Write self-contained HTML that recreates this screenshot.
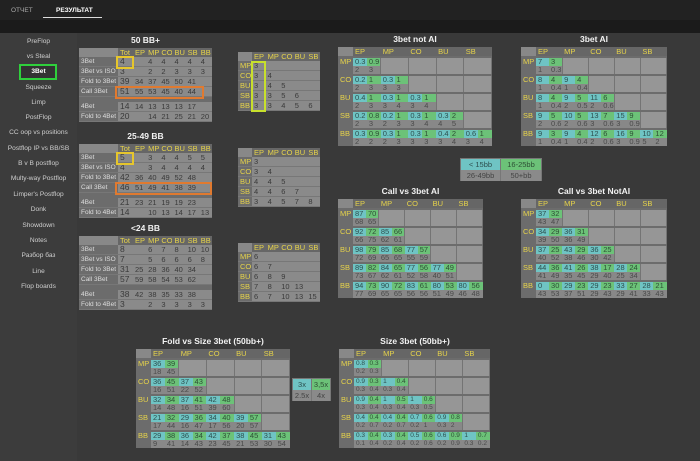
<!DOCTYPE html><html><head><meta charset="utf-8"><style>
*{margin:0;padding:0;box-sizing:border-box}
body{width:700px;height:461px;overflow:hidden;background:#393939;font-family:"Liberation Sans",sans-serif;position:relative}
.top{position:absolute;left:0;top:0;width:700px;height:20px;background:#222}
.band{position:absolute;left:0;top:20px;width:700px;height:13px;background:#1b1b1b}
.tab{position:absolute;top:7px;font-size:6.5px;color:#aaa}
.side{position:absolute;left:0;top:33px;width:77px;height:428px;background:#3c3c3c}
.si{position:absolute;left:0;width:77px;text-align:center;font-size:6.6px;color:#cfcfcf}
.ttl{position:absolute;font-size:8.5px;color:#f2f2f2;font-weight:bold;text-align:center}
table{position:absolute;border-collapse:collapse;table-layout:fixed;font-size:7.5px;background:#6c6c6c}
td,th{padding:0 0 0 2px;overflow:hidden;white-space:nowrap;font-weight:normal;text-align:left}
.m td{height:8px;line-height:8px}
.m th{height:10px;color:#e6d34a;background:#666;font-size:7.5px}
.m th.k{background:#888}
.l{color:#e6d34a;vertical-align:top;background:#6c6c6c;font-size:7.5px}
.c{background:#6fc4c4;color:#2d4f4f}
.g{background:#6cc278;color:#2d4f34}
.s{background:#888;color:#4a4a4a}
.e{background:#969696;border:1px solid #747474}
tr.t td{border-top:2px solid #6c6c6c}
.p td{height:9px;line-height:9px;background:#8a8a8a;color:#3a3a3a;border-bottom:1px solid #777}
.p td.n{background:#6c6c6c;color:#ddd;font-size:6.5px}
.p th{height:9px;color:#e6d34a;background:#666;font-size:7.5px}
.p th.k{background:#888}
.p td.b{font-size:8.5px}
.p tr.gap td{height:5px;background:#6c6c6c;border:none}
.q td{height:9px;line-height:9px;background:#8a8a8a;color:#3a3a3a;border-bottom:1px solid #777}
.q td.n{background:#6c6c6c;color:#e6d34a;font-size:7.5px}
.q th{height:9px;color:#e6d34a;background:#666;font-size:7.5px}
.q th.k{background:#888}
.box{position:absolute;border:2px solid}
.lg{position:absolute;font-size:7.5px}
.lg div{position:absolute;text-align:center;height:11px;line-height:11px}
</style></head><body>
<div class="top"></div><div class="band"></div>
<div class="tab" style="left:11px">ОТЧЕТ</div>
<div class="tab" style="left:56px;color:#fff;font-weight:bold">РЕЗУЛЬТАТ</div>
<div style="position:absolute;left:43px;top:17px;width:59px;height:1px;background:#ddd"></div>
<div class="side"></div>
<div class="si" style="top:38px">PreFlop</div>
<div class="si" style="top:53px">vs Steal</div>
<div style="position:absolute;left:19px;top:64px;width:38px;height:16px;border:2px solid #2fd03c;background:#333"></div>
<div class="si" style="top:68px;color:#fff;font-weight:bold">3Bet</div>
<div class="si" style="top:84px">Squeeze</div>
<div class="si" style="top:99px">Limp</div>
<div class="si" style="top:114px">PostFlop</div>
<div class="si" style="top:129px">CC oop vs positions</div>
<div class="si" style="top:145px">Postflop IP vs BB/SB</div>
<div class="si" style="top:160px">B v B postflop</div>
<div class="si" style="top:175px">Multy-way Postflop</div>
<div class="si" style="top:191px">Limper's Postflop</div>
<div class="si" style="top:206px">Donk</div>
<div class="si" style="top:222px">Showdown</div>
<div class="si" style="top:237px">Notes</div>
<div class="si" style="top:252px">Разбор баз</div>
<div class="si" style="top:268px">Line</div>
<div class="si" style="top:283px">Flop boards</div>

<div class="ttl" style="left:79px;top:35px;width:133px">50 BB+</div>
<table class="p" style="left:79px;top:48px;width:133px"><colgroup><col style="width:39px"><col style="width:15px"><col><col><col><col><col><col></colgroup>
<tr><th class="k"></th><th>Tot</th><th>EP</th><th>MP</th><th>CO</th><th>BU</th><th>SB</th><th>BB</th></tr>
<tr><td class="n">3Bet</td><td class="b">4</td><td></td><td>4</td><td>4</td><td>4</td><td>4</td><td>4</td></tr>
<tr><td class="n">3Bet vs ISO</td><td class="b">3</td><td></td><td>2</td><td>2</td><td>3</td><td>3</td><td>3</td></tr>
<tr><td class="n">Fold to 3Bet</td><td class="b">39</td><td>34</td><td>37</td><td>45</td><td>50</td><td>41</td><td></td></tr>
<tr><td class="n">Call 3Bet</td><td class="b">51</td><td>55</td><td>53</td><td>45</td><td>40</td><td>44</td><td></td></tr>
<tr class="gap"><td colspan="8"></td></tr>
<tr><td class="n">4Bet</td><td class="b">14</td><td>14</td><td>13</td><td>13</td><td>13</td><td>17</td><td></td></tr>
<tr><td class="n">Fold to 4Bet</td><td class="b">20</td><td></td><td>14</td><td>21</td><td>25</td><td>21</td><td>20</td></tr></table>
<div class="box" style="left:116px;top:56px;width:18px;height:13px;border-color:#e6c62c"></div>
<div class="box" style="left:115px;top:86px;width:89px;height:13px;border-color:#e07a30"></div>

<div class="ttl" style="left:79px;top:131px;width:133px">25-49 BB</div>
<table class="p" style="left:79px;top:144px;width:133px"><colgroup><col style="width:39px"><col style="width:15px"><col><col><col><col><col><col></colgroup>
<tr><th class="k"></th><th>Tot</th><th>EP</th><th>MP</th><th>CO</th><th>BU</th><th>SB</th><th>BB</th></tr>
<tr><td class="n">3Bet</td><td class="b">5</td><td></td><td>3</td><td>4</td><td>4</td><td>5</td><td>5</td></tr>
<tr><td class="n">3Bet vs ISO</td><td class="b">4</td><td></td><td>3</td><td>4</td><td>4</td><td>4</td><td>4</td></tr>
<tr><td class="n">Fold to 3Bet</td><td class="b">42</td><td>36</td><td>40</td><td>49</td><td>52</td><td>48</td><td></td></tr>
<tr><td class="n">Call 3Bet</td><td class="b">46</td><td>51</td><td>49</td><td>41</td><td>38</td><td>39</td><td></td></tr>
<tr class="gap"><td colspan="8"></td></tr>
<tr><td class="n">4Bet</td><td class="b">21</td><td>23</td><td>21</td><td>19</td><td>19</td><td>23</td><td></td></tr>
<tr><td class="n">Fold to 4Bet</td><td class="b">14</td><td></td><td>10</td><td>13</td><td>14</td><td>17</td><td>13</td></tr></table>
<div class="box" style="left:116px;top:152px;width:18px;height:13px;border-color:#e6c62c"></div>
<div class="box" style="left:115px;top:182px;width:97px;height:13px;border-color:#e07a30"></div>

<div class="ttl" style="left:79px;top:223px;width:133px">&lt;24 BB</div>
<table class="p" style="left:79px;top:236px;width:133px"><colgroup><col style="width:39px"><col style="width:15px"><col><col><col><col><col><col></colgroup>
<tr><th class="k"></th><th>Tot</th><th>EP</th><th>MP</th><th>CO</th><th>BU</th><th>SB</th><th>BB</th></tr>
<tr><td class="n">3Bet</td><td class="b">8</td><td></td><td>6</td><td>7</td><td>8</td><td>10</td><td>10</td></tr>
<tr><td class="n">3Bet vs ISO</td><td class="b">7</td><td></td><td>5</td><td>6</td><td>6</td><td>6</td><td>8</td></tr>
<tr><td class="n">Fold to 3Bet</td><td class="b">31</td><td>25</td><td>28</td><td>36</td><td>40</td><td>34</td><td></td></tr>
<tr><td class="n">Call 3Bet</td><td class="b">57</td><td>59</td><td>58</td><td>54</td><td>53</td><td>62</td><td></td></tr>
<tr class="gap"><td colspan="8"></td></tr>
<tr><td class="n">4Bet</td><td class="b">38</td><td>42</td><td>38</td><td>35</td><td>33</td><td>38</td><td></td></tr>
<tr><td class="n">Fold to 4Bet</td><td class="b">3</td><td></td><td>2</td><td>3</td><td>3</td><td>3</td><td>3</td></tr></table>

<table class="q" style="left:238px;top:52px;width:82px"><colgroup><col style="width:14px"><col><col><col><col><col></colgroup>
<tr><th class="k"></th><th>EP</th><th>MP</th><th>CO</th><th>BU</th><th>SB</th></tr>
<tr><td class="n">MP</td><td>3</td><td></td><td></td><td></td><td></td></tr>
<tr><td class="n">CO</td><td>3</td><td>4</td><td></td><td></td><td></td></tr>
<tr><td class="n">BU</td><td>3</td><td>4</td><td>5</td><td></td><td></td></tr>
<tr><td class="n">SB</td><td>3</td><td>3</td><td>5</td><td>6</td><td></td></tr>
<tr><td class="n">BB</td><td>3</td><td>3</td><td>4</td><td>5</td><td>6</td></tr></table>
<div class="box" style="left:251px;top:61px;width:15px;height:51px;border-color:#c8e02c"></div>
<table class="q" style="left:238px;top:148px;width:82px"><colgroup><col style="width:14px"><col><col><col><col><col></colgroup>
<tr><th class="k"></th><th>EP</th><th>MP</th><th>CO</th><th>BU</th><th>SB</th></tr>
<tr><td class="n">MP</td><td>3</td><td></td><td></td><td></td><td></td></tr>
<tr><td class="n">CO</td><td>3</td><td>4</td><td></td><td></td><td></td></tr>
<tr><td class="n">BU</td><td>4</td><td>4</td><td>5</td><td></td><td></td></tr>
<tr><td class="n">SB</td><td>4</td><td>4</td><td>6</td><td>7</td><td></td></tr>
<tr><td class="n">BB</td><td>3</td><td>4</td><td>5</td><td>7</td><td>8</td></tr></table>
<table class="q" style="left:238px;top:243px;width:82px"><colgroup><col style="width:14px"><col><col><col><col><col></colgroup>
<tr><th class="k"></th><th>EP</th><th>MP</th><th>CO</th><th>BU</th><th>SB</th></tr>
<tr><td class="n">MP</td><td>6</td><td></td><td></td><td></td><td></td></tr>
<tr><td class="n">CO</td><td>6</td><td>7</td><td></td><td></td><td></td></tr>
<tr><td class="n">BU</td><td>6</td><td>8</td><td>9</td><td></td><td></td></tr>
<tr><td class="n">SB</td><td>7</td><td>8</td><td>10</td><td>13</td><td></td></tr>
<tr><td class="n">BB</td><td>6</td><td>7</td><td>10</td><td>13</td><td>15</td></tr></table>

<div class="ttl" style="left:338px;top:34px;width:154px">3bet not AI</div>
<table class="m" style="left:338px;top:47px;width:154px"><colgroup><col style="width:15px"><col><col><col><col><col><col><col><col><col><col></colgroup>
<tr><th class="k"></th><th colspan="2">EP</th><th colspan="2">MP</th><th colspan="2">CO</th><th colspan="2">BU</th><th colspan="2">SB</th></tr>
<tr class="t"><td class="l" rowspan="2">MP</td><td class="c">0.3</td><td class="g">0.9</td><td class="e" colspan="2" rowspan="2"></td><td class="e" colspan="2" rowspan="2"></td><td class="e" colspan="2" rowspan="2"></td><td class="e" colspan="2" rowspan="2"></td></tr>
<tr><td class="s">2</td><td class="s">3</td></tr>
<tr class="t"><td class="l" rowspan="2">CO</td><td class="c">0.2</td><td class="g">1</td><td class="c">0.3</td><td class="g">1</td><td class="e" colspan="2" rowspan="2"></td><td class="e" colspan="2" rowspan="2"></td><td class="e" colspan="2" rowspan="2"></td></tr>
<tr><td class="s">2</td><td class="s">3</td><td class="s">3</td><td class="s">3</td></tr>
<tr class="t"><td class="l" rowspan="2">BU</td><td class="c">0.4</td><td class="g">1</td><td class="c">0.3</td><td class="g">1</td><td class="c">0.3</td><td class="g">1</td><td class="e" colspan="2" rowspan="2"></td><td class="e" colspan="2" rowspan="2"></td></tr>
<tr><td class="s">2</td><td class="s">3</td><td class="s">3</td><td class="s">4</td><td class="s">3</td><td class="s">4</td></tr>
<tr class="t"><td class="l" rowspan="2">SB</td><td class="c">0.2</td><td class="g">0.8</td><td class="c">0.2</td><td class="g">1</td><td class="c">0.3</td><td class="g">1</td><td class="c">0.3</td><td class="g">2</td><td class="e" colspan="2" rowspan="2"></td></tr>
<tr><td class="s">2</td><td class="s">3</td><td class="s">2</td><td class="s">3</td><td class="s">3</td><td class="s">4</td><td class="s">4</td><td class="s">5</td></tr>
<tr class="t"><td class="l" rowspan="2">BB</td><td class="c">0.3</td><td class="g">0.9</td><td class="c">0.3</td><td class="g">1</td><td class="c">0.3</td><td class="g">1</td><td class="c">0.4</td><td class="g">2</td><td class="c">0.6</td><td class="g">1</td></tr>
<tr><td class="s">2</td><td class="s">2</td><td class="s">2</td><td class="s">3</td><td class="s">3</td><td class="s">3</td><td class="s">3</td><td class="s">4</td><td class="s">3</td><td class="s">4</td></tr></table>

<div class="ttl" style="left:521px;top:34px;width:146px">3bet AI</div>
<table class="m" style="left:521px;top:47px;width:146px"><colgroup><col style="width:15px"><col><col><col><col><col><col><col><col><col><col></colgroup>
<tr><th class="k"></th><th colspan="2">EP</th><th colspan="2">MP</th><th colspan="2">CO</th><th colspan="2">BU</th><th colspan="2">SB</th></tr>
<tr class="t"><td class="l" rowspan="2">MP</td><td class="c">7</td><td class="g">3</td><td class="e" colspan="2" rowspan="2"></td><td class="e" colspan="2" rowspan="2"></td><td class="e" colspan="2" rowspan="2"></td><td class="e" colspan="2" rowspan="2"></td></tr>
<tr><td class="s">1</td><td class="s">0.3</td></tr>
<tr class="t"><td class="l" rowspan="2">CO</td><td class="c">8</td><td class="g">4</td><td class="c">9</td><td class="g">4</td><td class="e" colspan="2" rowspan="2"></td><td class="e" colspan="2" rowspan="2"></td><td class="e" colspan="2" rowspan="2"></td></tr>
<tr><td class="s">1</td><td class="s">0.4</td><td class="s">1</td><td class="s">0.4</td></tr>
<tr class="t"><td class="l" rowspan="2">BU</td><td class="c">8</td><td class="g">4</td><td class="c">9</td><td class="g">5</td><td class="c">11</td><td class="g">6</td><td class="e" colspan="2" rowspan="2"></td><td class="e" colspan="2" rowspan="2"></td></tr>
<tr><td class="s">1</td><td class="s">0.4</td><td class="s">2</td><td class="s">0.5</td><td class="s">2</td><td class="s">0.6</td></tr>
<tr class="t"><td class="l" rowspan="2">SB</td><td class="c">9</td><td class="g">5</td><td class="c">10</td><td class="g">5</td><td class="c">13</td><td class="g">7</td><td class="c">15</td><td class="g">9</td><td class="e" colspan="2" rowspan="2"></td></tr>
<tr><td class="s">2</td><td class="s">0.6</td><td class="s">2</td><td class="s">0.6</td><td class="s">3</td><td class="s">0.6</td><td class="s">3</td><td class="s">0.9</td></tr>
<tr class="t"><td class="l" rowspan="2">BB</td><td class="c">9</td><td class="g">3</td><td class="c">9</td><td class="g">4</td><td class="c">12</td><td class="g">6</td><td class="c">16</td><td class="g">9</td><td class="c">10</td><td class="g">12</td></tr>
<tr><td class="s">1</td><td class="s">0.4</td><td class="s">1</td><td class="s">0.4</td><td class="s">2</td><td class="s">0.6</td><td class="s">3</td><td class="s">0.9</td><td class="s">5</td><td class="s">2</td></tr></table>

<div class="lg" style="left:460px;top:158px;width:82px;height:23px;background:#777">
<div class="c" style="left:1px;top:1px;width:39px">&lt; 15bb</div>
<div class="g" style="left:41px;top:1px;width:40px">16-25bb</div>
<div style="left:1px;top:12px;width:39px;background:#8a8a8a;color:#444">26-49bb</div>
<div style="left:41px;top:12px;width:40px;background:#8a8a8a;color:#444">50+bb</div></div>

<div class="ttl" style="left:338px;top:186px;width:145px">Call vs 3bet AI</div>
<table class="m" style="left:338px;top:199px;width:145px"><colgroup><col style="width:15px"><col><col><col><col><col><col><col><col><col><col></colgroup>
<tr><th class="k"></th><th colspan="2">EP</th><th colspan="2">MP</th><th colspan="2">CO</th><th colspan="2">BU</th><th colspan="2">SB</th></tr>
<tr class="t"><td class="l" rowspan="2">MP</td><td class="c">87</td><td class="g">70</td><td class="e" colspan="2" rowspan="2"></td><td class="e" colspan="2" rowspan="2"></td><td class="e" colspan="2" rowspan="2"></td><td class="e" colspan="2" rowspan="2"></td></tr>
<tr><td class="s">68</td><td class="s">65</td></tr>
<tr class="t"><td class="l" rowspan="2">CO</td><td class="c">92</td><td class="g">72</td><td class="c">85</td><td class="g">66</td><td class="e" colspan="2" rowspan="2"></td><td class="e" colspan="2" rowspan="2"></td><td class="e" colspan="2" rowspan="2"></td></tr>
<tr><td class="s">66</td><td class="s">75</td><td class="s">62</td><td class="s">61</td></tr>
<tr class="t"><td class="l" rowspan="2">BU</td><td class="c">98</td><td class="g">79</td><td class="c">85</td><td class="g">68</td><td class="c">77</td><td class="g">57</td><td class="e" colspan="2" rowspan="2"></td><td class="e" colspan="2" rowspan="2"></td></tr>
<tr><td class="s">72</td><td class="s">69</td><td class="s">65</td><td class="s">65</td><td class="s">55</td><td class="s">59</td></tr>
<tr class="t"><td class="l" rowspan="2">SB</td><td class="c">89</td><td class="g">82</td><td class="c">84</td><td class="g">65</td><td class="c">77</td><td class="g">56</td><td class="c">77</td><td class="g">49</td><td class="e" colspan="2" rowspan="2"></td></tr>
<tr><td class="s">73</td><td class="s">67</td><td class="s">62</td><td class="s">61</td><td class="s">52</td><td class="s">58</td><td class="s">40</td><td class="s">51</td></tr>
<tr class="t"><td class="l" rowspan="2">BB</td><td class="c">94</td><td class="g">73</td><td class="c">90</td><td class="g">72</td><td class="c">83</td><td class="g">61</td><td class="c">80</td><td class="g">53</td><td class="c">80</td><td class="g">56</td></tr>
<tr><td class="s">77</td><td class="s">69</td><td class="s">65</td><td class="s">65</td><td class="s">56</td><td class="s">56</td><td class="s">51</td><td class="s">49</td><td class="s">46</td><td class="s">48</td></tr></table>

<div class="ttl" style="left:521px;top:186px;width:146px">Call vs 3bet NotAI</div>
<table class="m" style="left:521px;top:199px;width:146px"><colgroup><col style="width:15px"><col><col><col><col><col><col><col><col><col><col></colgroup>
<tr><th class="k"></th><th colspan="2">EP</th><th colspan="2">MP</th><th colspan="2">CO</th><th colspan="2">BU</th><th colspan="2">SB</th></tr>
<tr class="t"><td class="l" rowspan="2">MP</td><td class="c">37</td><td class="g">32</td><td class="e" colspan="2" rowspan="2"></td><td class="e" colspan="2" rowspan="2"></td><td class="e" colspan="2" rowspan="2"></td><td class="e" colspan="2" rowspan="2"></td></tr>
<tr><td class="s">43</td><td class="s">47</td></tr>
<tr class="t"><td class="l" rowspan="2">CO</td><td class="c">34</td><td class="g">29</td><td class="c">36</td><td class="g">31</td><td class="e" colspan="2" rowspan="2"></td><td class="e" colspan="2" rowspan="2"></td><td class="e" colspan="2" rowspan="2"></td></tr>
<tr><td class="s">39</td><td class="s">50</td><td class="s">36</td><td class="s">49</td></tr>
<tr class="t"><td class="l" rowspan="2">BU</td><td class="c">37</td><td class="g">25</td><td class="c">43</td><td class="g">29</td><td class="c">36</td><td class="g">25</td><td class="e" colspan="2" rowspan="2"></td><td class="e" colspan="2" rowspan="2"></td></tr>
<tr><td class="s">40</td><td class="s">52</td><td class="s">38</td><td class="s">46</td><td class="s">30</td><td class="s">42</td></tr>
<tr class="t"><td class="l" rowspan="2">SB</td><td class="c">44</td><td class="g">36</td><td class="c">41</td><td class="g">26</td><td class="c">38</td><td class="g">17</td><td class="c">28</td><td class="g">24</td><td class="e" colspan="2" rowspan="2"></td></tr>
<tr><td class="s">41</td><td class="s">49</td><td class="s">35</td><td class="s">45</td><td class="s">29</td><td class="s">40</td><td class="s">25</td><td class="s">34</td></tr>
<tr class="t"><td class="l" rowspan="2">BB</td><td class="c">0</td><td class="g">30</td><td class="c">29</td><td class="g">23</td><td class="c">29</td><td class="g">23</td><td class="c">33</td><td class="g">27</td><td class="c">28</td><td class="g">21</td></tr>
<tr><td class="s">43</td><td class="s">53</td><td class="s">37</td><td class="s">51</td><td class="s">29</td><td class="s">43</td><td class="s">29</td><td class="s">41</td><td class="s">33</td><td class="s">43</td></tr></table>

<div class="ttl" style="left:136px;top:336px;width:154px">Fold vs Size 3bet (50bb+)</div>
<table class="m" style="left:136px;top:349px;width:154px"><colgroup><col style="width:15px"><col><col><col><col><col><col><col><col><col><col></colgroup>
<tr><th class="k"></th><th colspan="2">EP</th><th colspan="2">MP</th><th colspan="2">CO</th><th colspan="2">BU</th><th colspan="2">SB</th></tr>
<tr class="t"><td class="l" rowspan="2">MP</td><td class="c">36</td><td class="g">39</td><td class="e" colspan="2" rowspan="2"></td><td class="e" colspan="2" rowspan="2"></td><td class="e" colspan="2" rowspan="2"></td><td class="e" colspan="2" rowspan="2"></td></tr>
<tr><td class="s">18</td><td class="s">45</td></tr>
<tr class="t"><td class="l" rowspan="2">CO</td><td class="c">36</td><td class="g">45</td><td class="c">37</td><td class="g">43</td><td class="e" colspan="2" rowspan="2"></td><td class="e" colspan="2" rowspan="2"></td><td class="e" colspan="2" rowspan="2"></td></tr>
<tr><td class="s">16</td><td class="s">51</td><td class="s">22</td><td class="s">52</td></tr>
<tr class="t"><td class="l" rowspan="2">BU</td><td class="c">32</td><td class="g">34</td><td class="c">37</td><td class="g">41</td><td class="c">42</td><td class="g">48</td><td class="e" colspan="2" rowspan="2"></td><td class="e" colspan="2" rowspan="2"></td></tr>
<tr><td class="s">14</td><td class="s">48</td><td class="s">16</td><td class="s">51</td><td class="s">39</td><td class="s">60</td></tr>
<tr class="t"><td class="l" rowspan="2">SB</td><td class="c">21</td><td class="g">32</td><td class="c">29</td><td class="g">36</td><td class="c">34</td><td class="g">40</td><td class="c">39</td><td class="g">57</td><td class="e" colspan="2" rowspan="2"></td></tr>
<tr><td class="s">17</td><td class="s">44</td><td class="s">16</td><td class="s">47</td><td class="s">17</td><td class="s">56</td><td class="s">20</td><td class="s">57</td></tr>
<tr class="t"><td class="l" rowspan="2">BB</td><td class="c">29</td><td class="g">38</td><td class="c">36</td><td class="g">34</td><td class="c">42</td><td class="g">37</td><td class="c">38</td><td class="g">45</td><td class="c">31</td><td class="g">43</td></tr>
<tr><td class="s">9</td><td class="s">41</td><td class="s">14</td><td class="s">43</td><td class="s">23</td><td class="s">45</td><td class="s">21</td><td class="s">53</td><td class="s">30</td><td class="s">54</td></tr></table>

<div class="lg" style="left:292px;top:378px;width:39px;height:23px;background:#777">
<div class="c" style="left:1px;top:1px;width:18px">3x</div>
<div class="g" style="left:20px;top:1px;width:18px">3,5x</div>
<div style="left:1px;top:12px;width:18px;background:#8a8a8a;color:#444">2.5x</div>
<div style="left:20px;top:12px;width:18px;background:#8a8a8a;color:#444">4x</div></div>

<div class="ttl" style="left:339px;top:336px;width:152px">Size 3bet (50bb+)</div>
<table class="m" style="left:339px;top:349px;width:151px;font-size:6.5px"><colgroup><col style="width:15px"><col><col><col><col><col><col><col><col><col><col></colgroup>
<tr><th class="k"></th><th colspan="2">EP</th><th colspan="2">MP</th><th colspan="2">CO</th><th colspan="2">BU</th><th colspan="2">SB</th></tr>
<tr class="t"><td class="l" rowspan="2">MP</td><td class="c">0.8</td><td class="g">0.3</td><td class="e" colspan="2" rowspan="2"></td><td class="e" colspan="2" rowspan="2"></td><td class="e" colspan="2" rowspan="2"></td><td class="e" colspan="2" rowspan="2"></td></tr>
<tr><td class="s">0.2</td><td class="s">0.3</td></tr>
<tr class="t"><td class="l" rowspan="2">CO</td><td class="c">0.9</td><td class="g">0.3</td><td class="c">1</td><td class="g">0.4</td><td class="e" colspan="2" rowspan="2"></td><td class="e" colspan="2" rowspan="2"></td><td class="e" colspan="2" rowspan="2"></td></tr>
<tr><td class="s">0.3</td><td class="s">0.4</td><td class="s">0.3</td><td class="s">0.4</td></tr>
<tr class="t"><td class="l" rowspan="2">BU</td><td class="c">0.9</td><td class="g">0.4</td><td class="c">1</td><td class="g">0.5</td><td class="c">1</td><td class="g">0.6</td><td class="e" colspan="2" rowspan="2"></td><td class="e" colspan="2" rowspan="2"></td></tr>
<tr><td class="s">0.3</td><td class="s">0.4</td><td class="s">0.3</td><td class="s">0.4</td><td class="s">0.3</td><td class="s">0.5</td></tr>
<tr class="t"><td class="l" rowspan="2">SB</td><td class="c">0.4</td><td class="g">0.4</td><td class="c">0.4</td><td class="g">0.4</td><td class="c">0.7</td><td class="g">0.6</td><td class="c">0.9</td><td class="g">0.8</td><td class="e" colspan="2" rowspan="2"></td></tr>
<tr><td class="s">0.2</td><td class="s">0.7</td><td class="s">0.2</td><td class="s">0.7</td><td class="s">0.2</td><td class="s">1</td><td class="s">0.3</td><td class="s">2</td></tr>
<tr class="t"><td class="l" rowspan="2">BB</td><td class="c">0.3</td><td class="g">0.4</td><td class="c">0.3</td><td class="g">0.4</td><td class="c">0.5</td><td class="g">0.6</td><td class="c">0.6</td><td class="g">0.9</td><td class="c">1</td><td class="g">0.7</td></tr>
<tr><td class="s">0.1</td><td class="s">0.4</td><td class="s">0.2</td><td class="s">0.4</td><td class="s">0.2</td><td class="s">0.6</td><td class="s">0.2</td><td class="s">0.9</td><td class="s">0.3</td><td class="s">0.2</td></tr></table>
</body></html>
